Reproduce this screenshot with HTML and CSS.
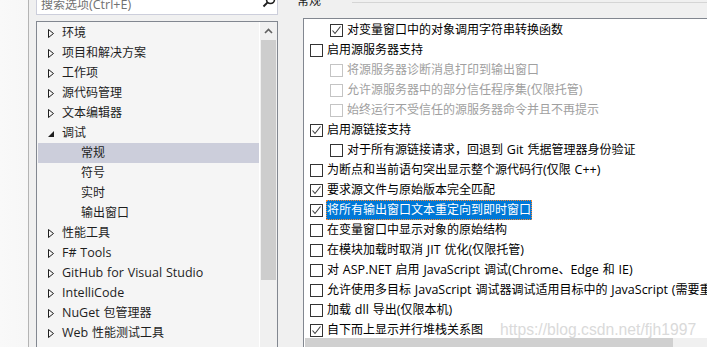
FILE: index.html
```html
<!DOCTYPE html>
<html lang="zh">
<head>
<meta charset="utf-8">
<link rel="stylesheet" href="styles.css">
</head>
<body>
<div class="app">
  <div class="left">
    <div class="search">
      <span class="ph">搜索选项<span class="en">(Ctrl+E)</span></span>
      <svg class="mag" width="14" height="14" viewBox="0 0 14 14"><circle cx="8.5" cy="5.5" r="4" fill="none" stroke="#1e1e1e" stroke-width="1.6"/><line x1="5.6" y1="8.4" x2="1.5" y2="12.5" stroke="#1e1e1e" stroke-width="2"/></svg>
    </div>
    <div class="tree">
      <div class="tree-list">
        <div class="node"><svg class="tri" width="6" height="9" viewBox="0 0 6 9"><polygon points="0.5,0.5 5.5,4.5 0.5,8.5" fill="none" stroke="#1e1e1e"/></svg><span class="lbl">环境</span></div>
        <div class="node"><svg class="tri" width="6" height="9" viewBox="0 0 6 9"><polygon points="0.5,0.5 5.5,4.5 0.5,8.5" fill="none" stroke="#1e1e1e"/></svg><span class="lbl">项目和解决方案</span></div>
        <div class="node"><svg class="tri" width="6" height="9" viewBox="0 0 6 9"><polygon points="0.5,0.5 5.5,4.5 0.5,8.5" fill="none" stroke="#1e1e1e"/></svg><span class="lbl">工作项</span></div>
        <div class="node"><svg class="tri" width="6" height="9" viewBox="0 0 6 9"><polygon points="0.5,0.5 5.5,4.5 0.5,8.5" fill="none" stroke="#1e1e1e"/></svg><span class="lbl">源代码管理</span></div>
        <div class="node"><svg class="tri" width="6" height="9" viewBox="0 0 6 9"><polygon points="0.5,0.5 5.5,4.5 0.5,8.5" fill="none" stroke="#1e1e1e"/></svg><span class="lbl">文本编辑器</span></div>
        <div class="node"><svg class="tri" width="6" height="9" viewBox="0 0 6 9"><polygon points="6,2 6,8 0,8" fill="#1e1e1e"/></svg><span class="lbl">调试</span></div>
        <div class="node child sel"><span class="lbl">常规</span></div>
        <div class="node child"><span class="lbl">符号</span></div>
        <div class="node child"><span class="lbl">实时</span></div>
        <div class="node child"><span class="lbl">输出窗口</span></div>
        <div class="node"><svg class="tri" width="6" height="9" viewBox="0 0 6 9"><polygon points="0.5,0.5 5.5,4.5 0.5,8.5" fill="none" stroke="#1e1e1e"/></svg><span class="lbl">性能工具</span></div>
        <div class="node"><svg class="tri" width="6" height="9" viewBox="0 0 6 9"><polygon points="0.5,0.5 5.5,4.5 0.5,8.5" fill="none" stroke="#1e1e1e"/></svg><span class="lbl en">F# Tools</span></div>
        <div class="node"><svg class="tri" width="6" height="9" viewBox="0 0 6 9"><polygon points="0.5,0.5 5.5,4.5 0.5,8.5" fill="none" stroke="#1e1e1e"/></svg><span class="lbl en">GitHub for Visual Studio</span></div>
        <div class="node"><svg class="tri" width="6" height="9" viewBox="0 0 6 9"><polygon points="0.5,0.5 5.5,4.5 0.5,8.5" fill="none" stroke="#1e1e1e"/></svg><span class="lbl en">IntelliCode</span></div>
        <div class="node"><svg class="tri" width="6" height="9" viewBox="0 0 6 9"><polygon points="0.5,0.5 5.5,4.5 0.5,8.5" fill="none" stroke="#1e1e1e"/></svg><span class="lbl"><span class="en">NuGet </span>包管理器</span></div>
        <div class="node"><svg class="tri" width="6" height="9" viewBox="0 0 6 9"><polygon points="0.5,0.5 5.5,4.5 0.5,8.5" fill="none" stroke="#1e1e1e"/></svg><span class="lbl"><span class="en">Web </span>性能测试工具</span></div>
      </div>
      <div class="vscroll">
        <div class="up"><svg width="9" height="6" viewBox="0 0 9 6"><polyline points="1,5 4.5,1.5 8,5" fill="none" stroke="#606060" stroke-width="1.6"/></svg></div>
        <div class="thumb"></div>
      </div>
    </div>
  </div>

  <div class="right">
    <div class="group-head"><span class="title">常规</span><span class="rule"></span></div>
    <div class="panel">
      <div class="opts">
        <div class="opt l1"><span class="cb on"><svg width="11" height="11" viewBox="0 0 11 11"><polyline points="1.5,5.5 4,8.5 9.5,1.5" fill="none" stroke="#3c3c3c" stroke-width="1.1"/></svg></span><span class="txt">对变量窗口中的对象调用字符串转换函数</span></div>
        <div class="opt"><span class="cb"></span><span class="txt">启用源服务器支持</span></div>
        <div class="opt l1 dis"><span class="cb"></span><span class="txt">将源服务器诊断消息打印到输出窗口</span></div>
        <div class="opt l1 dis"><span class="cb"></span><span class="txt">允许源服务器中的部分信任程序集<span class="en">(</span>仅限托管<span class="en">)</span></span></div>
        <div class="opt l1 dis"><span class="cb"></span><span class="txt">始终运行不受信任的源服务器命令并且不再提示</span></div>
        <div class="opt"><span class="cb on"><svg width="11" height="11" viewBox="0 0 11 11"><polyline points="1.5,5.5 4,8.5 9.5,1.5" fill="none" stroke="#3c3c3c" stroke-width="1.1"/></svg></span><span class="txt">启用源链接支持</span></div>
        <div class="opt l1"><span class="cb"></span><span class="txt">对于所有源链接请求，回退到<span class="en"> Git </span>凭据管理器身份验证</span></div>
        <div class="opt"><span class="cb"></span><span class="txt">为断点和当前语句突出显示整个源代码行<span class="en">(</span>仅限<span class="en"> C++)</span></span></div>
        <div class="opt"><span class="cb on"><svg width="11" height="11" viewBox="0 0 11 11"><polyline points="1.5,5.5 4,8.5 9.5,1.5" fill="none" stroke="#3c3c3c" stroke-width="1.1"/></svg></span><span class="txt">要求源文件与原始版本完全匹配</span></div>
        <div class="opt"><span class="cb on"><svg width="11" height="11" viewBox="0 0 11 11"><polyline points="1.5,5.5 4,8.5 9.5,1.5" fill="none" stroke="#3c3c3c" stroke-width="1.1"/></svg></span><span class="txt focus">将所有输出窗口文本重定向到即时窗口</span></div>
        <div class="opt"><span class="cb"></span><span class="txt">在变量窗口中显示对象的原始结构</span></div>
        <div class="opt"><span class="cb"></span><span class="txt">在模块加载时取消<span class="en"> JIT </span>优化<span class="en">(</span>仅限托管<span class="en">)</span></span></div>
        <div class="opt"><span class="cb"></span><span class="txt">对<span class="en"> ASP.NET </span>启用<span class="en"> JavaScript </span>调试<span class="en">(Chrome</span>、<span class="en">Edge </span>和<span class="en"> IE)</span></span></div>
        <div class="opt"><span class="cb"></span><span class="txt">允许使用多目标<span class="en"> JavaScript </span>调试器调试适用目标中的<span class="en"> JavaScript (</span>需要重启<span class="en">)</span></span></div>
        <div class="opt"><span class="cb"></span><span class="txt">加载<span class="en"> dll </span>导出<span class="en">(</span>仅限本机<span class="en">)</span></span></div>
        <div class="opt"><span class="cb on"><svg width="11" height="11" viewBox="0 0 11 11"><polyline points="1.5,5.5 4,8.5 9.5,1.5" fill="none" stroke="#3c3c3c" stroke-width="1.1"/></svg></span><span class="txt">自下而上显示并行堆栈关系图</span></div>
      </div>
      <div class="hscroll">
        <div class="hthumb"><svg class="larr" width="6" height="9" viewBox="0 0 6 9"><polyline points="5,1 1.5,4.5 5,8" fill="none" stroke="#606060" stroke-width="1.6"/></svg></div>
        <div class="htrack"></div>
      </div>
    </div>
  </div>
</div>
<div class="watermark">https://blog.csdn.net/fjh1997</div>
</body>
</html>
```

FILE: styles.css
```css
* { box-sizing: border-box; }
html, body {
  margin: 0;
  padding: 0;
  width: 707px;
  height: 347px;
  overflow: hidden;
  background: #f0f0f0;
  font-family: "Open Sans", "Noto Sans CJK SC", sans-serif;
  font-size: 12px;
  color: #1e1e1e;
}
.en {
  font-size: 12.5px;
  word-spacing: 0.6px;
}
.app {
  display: flex;
  height: 347px;
}
.left {
  width: 278px;
  flex: none;
  padding-left: 36px;
  background: linear-gradient(to right, #f9f9f9 0, #f7f7f7 28px, #b4b4b4 28px, #b4b4b4 29px, #f0f0f0 29px);
}
.search {
  margin-top: -9px;
  height: 24px;
  border: 1px solid #cccedb;
  background: #fff;
  display: flex;
  align-items: center;
  padding-left: 4px;
  position: relative;
}
.ph {
  color: #717171;
  line-height: 22px;
  flex: 1;
  white-space: nowrap;
  margin-top: 3px;
}
.mag {
  margin-right: 1px;
  margin-top: -5px;
}
.tree {
  margin-top: 6px;
  height: 340px;
  border: 1px solid #828790;
  background: #f5f5f5;
  display: flex;
}
.tree-list {
  flex: 1;
  padding-top: 1px;
}
.node {
  display: flex;
  align-items: center;
  height: 20px;
  padding-left: 11px;
  margin-left: 1px;
  white-space: nowrap;
}
.node .tri { flex: none; margin-left: -1px; margin-right: 8px; }
.node.child { padding-left: 43px; }
.node.sel { background: #cccedb; }
.lbl { line-height: 20px; }
.vscroll {
  width: 18px;
  flex: none;
  border-left: 1px solid #ffffff;
  background: #f0f0f0;
  display: flex;
  flex-direction: column;
}
.up {
  height: 17px;
  display: flex;
  align-items: center;
  justify-content: center;
  padding-top: 1px;
}
.thumb {
  margin: 1px 1px 0 1px;
  height: 240px;
  background: #cdcdcd;
}
.right {
  flex: 1;
  display: flex;
  flex-direction: column;
  min-width: 0;
}
.group-head {
  margin-top: -8px;
  height: 16px;
  display: flex;
  margin-left: 19px;
}
.title { line-height: 16px; color: #1e1e1e; margin-top: 1px; }
.rule {
  flex: 1;
  height: 1px;
  margin-top: 10px;
  margin-left: 31px;
  background: #d5d5d5;
}
.panel {
  margin-top: 10px;
  margin-left: 25px;
  margin-right: -20px;
  flex: 1;
  border-left: 1px solid #828790;
  border-top: 1px solid #828790;
  background: #fff;
  display: flex;
  flex-direction: column;
}
.opts {
  height: 319px;
  padding-top: 1px;
  overflow: hidden;
}
.opt {
  display: flex;
  align-items: center;
  height: 20px;
  padding-left: 6px;
  white-space: nowrap;
  color: #000;
}
.opt.l1 { padding-left: 26px; }
.cb {
  width: 13px;
  height: 13px;
  flex: none;
  border: 1px solid #333333;
  background: #fff;
  display: flex;
  align-items: center;
  justify-content: center;
}
.opt.dis { color: #a0a0a0; }
.opt.dis .cb { border-color: #c4c4c4; }
.txt {
  margin-left: 3px;
  padding: 0 1px;
  line-height: 20px;
}
.txt.focus {
  background: #0078d7;
  color: #fff;
  outline: 1px dotted #ff8728;
  outline-offset: -1px;
  line-height: 20px;
}
.hscroll {
  height: 17px;
  margin-left: 1px;
  display: flex;
}
.hthumb {
  width: 368px;
  background: #d0d0d0;
  display: flex;
  align-items: flex-end;
  padding-left: 5px;
}
.larr { margin-bottom: -2px; }
.htrack {
  flex: 1;
  background: #f0f0f0;
}
.watermark {
  position: absolute;
  left: 500px;
  top: 321px;
  font-family: "Liberation Sans", Arial, sans-serif;
  font-size: 15.7px;
  line-height: 18px;
  color: #dadada;
  white-space: nowrap;
}
```
